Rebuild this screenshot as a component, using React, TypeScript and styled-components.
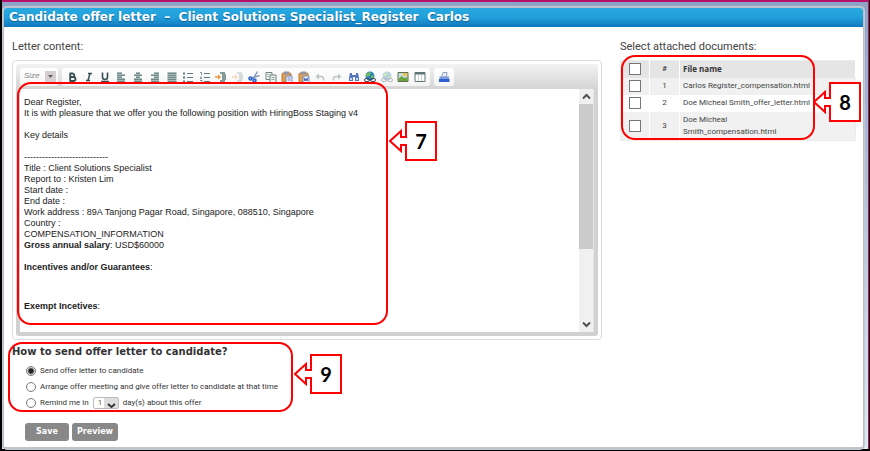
import React from "react";
import styled, { createGlobalStyle } from "styled-components";

const sans = `Roboto, "Noto Sans", sans-serif`;
const wide = `"DejaVu Sans", Verdana, sans-serif`;
const arial = `"Liberation Sans", Arial, sans-serif`;

const GlobalStyle = createGlobalStyle`
  *, *::before, *::after { box-sizing: border-box; }
  body { margin: 0; background: #000; font-family: ${sans}; color: #444; }
  button, select, input { font-family: inherit; margin: 0; }
`;

const Desktop = styled.div`
  min-height: 100vh;
  display: flex;
  border: solid #000;
  border-width: 0 1px 2px 2px;
`;

const Backdrop = styled.div`
  flex: 1;
  display: flex;
  padding: 5px 4px 0 1px;
  border-top: 2px solid #b5106a;
  border-right: 1px solid #b5106a;
  background: linear-gradient(#8fa3c6, #a9b9d6 30%, #dfeaf3);
`;

const Dialog = styled.section`
  flex: 1;
  min-width: 0;
  background: #fff;
  border: 1px solid #b9bdc4;
  border-bottom: 2px solid #bfc4c9;
  border-radius: 4px;
  box-shadow: 0 0 0 1px #c3c9d3;
`;

const TitleBar = styled.h1`
  margin: 0;
  padding: 0 5px;
  background: linear-gradient(#27a9e1 0%, #229fda 50%, #1079bf 100%);
  border-radius: 3px 3px 0 0;
  color: #fff;
  font: bold 12px/19px ${wide};
  white-space: pre;
  text-shadow: 0 1px 1px #0b5f98;
`;

const Columns = styled.div`
  display: grid;
  grid-template-columns: 5fr 2fr;
  gap: 18px;
  padding: 12px 7px 0 8px;
`;

const Column = styled.div`
  min-width: 0;
`;

const Label = styled.h2`
  margin: 0 0 5px;
  font: 11px/16px ${sans};
  color: #444;
`;

const Editor = styled.div`
  padding: 3px;
  border: 1px solid #dcdcdc;
  border-radius: 4px;
`;

const EditorShell = styled.div`
  position: relative;
  padding: 0 4px 4px;
  border-radius: 3px;
  background: linear-gradient(#f3f3f3 0, #d3d3d3 26px, #d0d0d0 100%);
`;

const Toolbar = styled.div`
  display: flex;
  align-items: center;
  gap: 4px;
  height: 25px;
  padding: 2px 0 1px;
`;

const ToolGroup = styled.div<{ $tools: number }>`
  display: grid;
  grid-template-columns: repeat(${(p) => p.$tools}, 1fr);
  width: ${(p) => (p.$tools > 1 ? 368 : 20)}px;
  height: 18px;
  padding: 0 2px;
  border-radius: 3px;
  background: linear-gradient(#ffffff, #f4f4f4);
`;

const ToolButton = styled.button`
  display: grid;
  place-items: center;
  padding: 0;
  border: 0;
  background: none;
`;

const SizeButton = styled.button`
  display: flex;
  align-items: center;
  justify-content: space-between;
  width: 38px;
  height: 18px;
  padding: 0 2px 2px 4px;
  border: 0;
  border-radius: 3px;
  background: linear-gradient(#ffffff, #f4f4f4);
  font: italic 8px/12px ${arial};
  color: #888;
`;

const SizeArrow = styled.svg`
  background: #d6cfd2;
`;

const EditArea = styled.div`
  display: flex;
  height: 243px;
  background: #fff;
`;

const Letter = styled.div`
  flex: 1;
  min-width: 0;
  padding: 8px 4px;
  overflow: hidden;
  outline: 0;
  font: 9px/11px ${arial};
  color: #222;

  p {
    margin: 0 0 11px;
  }
  p:last-child {
    margin-top: 28px;
  }
`;

const Scrollbar = styled.div`
  display: flex;
  flex-direction: column;
  width: 15px;
  background: #f0f0f0;
  border-right: 1px solid #e6e6e6;
`;

const ScrollButton = styled.button`
  display: grid;
  place-items: center;
  height: 15px;
  padding: 0;
  border: 0;
  background: #f0f0f0;
`;

const ScrollTrack = styled.div`
  flex: 1;
`;

const ScrollThumb = styled.div`
  height: 68%;
  background: #cbcbcb;
`;

const DeliveryArea = styled.div`
  position: relative;
  margin-top: 4px;
`;

const Delivery = styled.fieldset`
  min-width: 0;
  margin: 0;
  padding: 0 0 7px;
  border: 0;
`;

const DeliveryTitle = styled.legend`
  padding: 0;
  margin-bottom: 3px;
  font: bold 10px/16px ${wide};
  color: #333;
`;

const Option = styled.div`
  display: flex;
  align-items: center;
  gap: 4px;
  height: 16px;
  padding-left: 14px;
  font-size: 8px;
  line-height: 12px;
  color: #333;
`;

const Radio = styled.input`
  appearance: none;
  flex: none;
  width: 10px;
  height: 10px;
  border: 1px solid #777;
  border-radius: 50%;
  background: #fff;

  &:checked {
    background: radial-gradient(circle, #222 0 2px, #fff 4px);
  }
`;

const DayPicker = styled.span`
  position: relative;
  display: flex;
  width: 26px;
  height: 12px;
`;

const DaySelect = styled.select`
  appearance: none;
  width: 100%;
  padding: 0 0 0 4px;
  border: 1px solid #bbb;
  border-radius: 2px;
  background: linear-gradient(90deg, #fff 10px, #dedede 10px);
  font-size: 8px;
  line-height: 10px;
  color: #7a5a4a;
`;

const DayArrow = styled.svg`
  position: absolute;
  right: 3px;
  bottom: 0;
  pointer-events: none;
`;

const Actions = styled.div`
  display: flex;
  gap: 3px;
  padding: 5px 0 5px 13px;
`;

const ActionButton = styled.button`
  min-width: 44px;
  height: 18px;
  padding: 0 5px;
  border: 0;
  border-radius: 3px;
  background: #888;
  color: #fff;
  font: bold 8px/18px ${wide};
`;

const Attachments = styled.div`
  position: relative;
`;

const FileTable = styled.table`
  width: 100%;
  border: 1px solid #ececec;
  border-collapse: collapse;
  font-size: 8px;
  line-height: 12px;
  color: #444;
`;

const FileRow = styled.tr<{ $tone: string }>`
  background: ${(p) => p.$tone};
`;

const cell = `
  height: 17px;
  padding: 2px 0 2px 3px;
  border-right: 1px solid #fff;
  text-align: left;
`;

const HeadCell = styled.th`
  ${cell}
  font: bold 8px/12px "Open Sans", sans-serif;
  color: #333;
`;

const TickCell = styled.td`
  ${cell}
  width: 29px;
  padding: 0 0 0 8px;
  line-height: 0;
`;

const NumberCell = styled.td`
  ${cell}
  width: 30px;
  padding: 0;
  text-align: center;
`;

const NameCell = styled.td`
  ${cell}
  border-right: 0;
`;

const FileName = styled.label`
  display: block;
  max-width: 132px;
`;

const Tick = styled.input`
  appearance: none;
  width: 12px;
  height: 12px;
  border: 1px solid #777;
  background: #fff;
`;

const Outline = styled.div<{ $inset: string }>`
  position: absolute;
  inset: ${(p) => p.$inset};
  border: 2px solid #f00;
  border-radius: 14px;
  pointer-events: none;
`;

const CalloutBody = styled.div<{ $at: string; $gap: number }>`
  position: absolute;
  left: calc(100% + ${(p) => p.$gap}px);
  top: ${(p) => p.$at};
  display: flex;
  align-items: center;
  transform: translateY(-50%);
`;

const CalloutArrow = styled.svg`
  position: relative;
  z-index: 1;
  margin-right: -2px;
`;

const CalloutBox = styled.div`
  width: 32px;
  height: 40px;
  border: 2px solid #f00;
  background: #fff;
  color: #000;
  font: bold 20px/36px Lato, sans-serif;
  text-align: center;
`;

function Callout({ n, at = "50%", gap = 3 }: { n: number; at?: string; gap?: number }) {
  return (
    <CalloutBody $at={at} $gap={gap}>
      <CalloutArrow width="18" height="24">
        <path d="M18 8H12V2L1 12L12 22V16H18" fill="#fff" stroke="#f00" strokeWidth="2" />
      </CalloutArrow>
      <CalloutBox>{n}</CalloutBox>
    </CalloutBody>
  );
}

const ink = "#5d7c7a";

function lines(widths: number[], align: "l" | "c" | "r") {
  return widths.map((w, i) => (
    <rect key={i} x={align === "l" ? 1 : align === "r" ? 10 - w : 6 - w / 2} y={1.5 + i * 2} width={w} height="1.4" fill={ink} />
  ));
}

const clipboard = (
  <>
    <rect x="1" y="2" width="9" height="9" rx="1" fill="#e0a050" stroke="#b87a3a" />
    <rect x="3" y="0.5" width="5" height="3" fill="#8d97ad" />
    <path d="M5 5h6v6.5H5z" fill="#eef4ff" stroke="#7c8fb8" />
  </>
);

const globe = (
  <>
    <circle cx="6" cy="5" r="4.5" fill="#2f7fc8" />
    <path d="M3 2l3-1 1 2-2 2-2 1-1-2zM7 5l3-1-1 4-2 0z" fill="#6cc04b" />
    <rect x="0.5" y="7.5" width="5" height="3" rx="1.5" fill="none" stroke="#445" />
    <rect x="6.5" y="7.5" width="5" height="3" rx="1.5" fill="none" stroke="#445" />
  </>
);

const indent = (
  <>
    <path d="M5 2h5M7 4h4M7 6h4M7 8h4M5 10h5" stroke={ink} strokeWidth="1.4" />
    <path d="M0 6h4" stroke="#f0963a" strokeWidth="1.5" />
    <path d="M3 3.2L6 6L3 8.8z" fill="#f0963a" />
  </>
);

const tools: [string, React.ReactNode][] = [
  ["Bold", <path d="M3.5 2.5H7a1.8 1.8 0 0 1 0 3.5H4M4 6h3.5a2 2 0 0 1 0 4H3.5M4.2 2.5V10" fill="none" stroke="#354f50" strokeWidth="1.8" />],
  ["Italic", <path d="M5 2.5h4M3 9.5h4M7 2.5L5 9.5" fill="none" stroke="#354f50" strokeWidth="1.5" />],
  ["Underline", <path d="M3.5 1.5v4.5a2.5 2.5 0 0 0 5 0V1.5M2 10.5h8" fill="none" stroke="#354f50" strokeWidth="1.6" />],
  ["Align left", lines([5, 8, 5, 8, 8], "l")],
  ["Align centre", lines([4, 8, 4, 8, 8], "c")],
  ["Align right", lines([5, 8, 5, 8, 8], "r")],
  ["Justify", lines([9, 9, 9, 9, 9], "c")],
  ["Bulleted list", <><path d="M5 2.5h6M5 6.5h6M5 10.5h6" stroke={ink} /><path d="M1 1.5h2v2H1zM1 5.5h2v2H1zM1 9.5h2v2H1z" fill={ink} /></>],
  ["Numbered list", <><path d="M5 2.5h6M5 6.5h6M5 10.5h6" stroke={ink} /><path d="M1 1.5h1.5V4M1 6h2M1 7.5h2M1 9.5h2v2H1" fill="none" stroke={ink} strokeWidth="0.8" /></>],
  ["Increase indent", indent],
  ["Decrease indent", <g opacity="0.3">{indent}</g>],
  ["Cut", <><path d="M9.5 0.5L5.5 7M11.5 4.5L4 7" stroke="#8293b8" strokeWidth="1.4" /><circle cx="2.5" cy="7.5" r="1.5" fill="#9ab8ee" stroke="#2f66cc" strokeWidth="1.6" /><circle cx="6.5" cy="9.5" r="1.5" fill="#9ab8ee" stroke="#2f66cc" strokeWidth="1.6" /></>],
  ["Copy", <><path d="M1 1.5h6v7H1z" fill="#f4f7f7" stroke="#71847f" /><path d="M5 4h6v7.5H5z" fill="#eef3ee" stroke="#71847f" /><path d="M6.5 6.5h3M6.5 8.5h3M2.5 3.5h2M2.5 5.5h2" stroke="#8fa49a" /></>],
  ["Paste", <>{clipboard}<path d="M6.5 7h3M6.5 9h3" stroke="#6f87bd" /></>],
  ["Paste from Word", <>{clipboard}<path d="M6 6.5l1 3.5 1-2.5 1 2.5 1-3.5" fill="none" stroke="#3f62b5" /></>],
  ["Undo", <><path d="M5 2.5V8.5L1.5 5.5z" fill="#bcc6c6" /><path d="M4 5.5h3Q10 5.5 9.5 9.5" fill="none" stroke="#bcc6c6" strokeWidth="1.6" /></>],
  ["Redo", <><path d="M7 2.5V8.5L10.5 5.5z" fill="#bcc6c6" /><path d="M8 5.5H5Q2 5.5 2.5 9.5" fill="none" stroke="#bcc6c6" strokeWidth="1.6" /></>],
  ["Find", <><path d="M2 2h2v2h4V2h2l1 5v3H7V6H5v4H1V7z" fill="#5576be" /><path d="M2 7h2v2H2zM8 7h2v2H8z" fill="#c7dbfb" /></>],
  ["Link", globe],
  ["Unlink", <g opacity="0.35">{globe}</g>],
  ["Image", <><path d="M1 1.5h10v9H1z" fill="#c6dfe6" stroke="#5d6e45" /><path d="M1.5 8l3-3 3 2 3-1v4h-9z" fill="#6ba33d" /><path d="M6 2h4v3H6z" fill="#f2c14c" /></>],
  ["Table", <><path d="M1 1.5h10v9H1z" fill="#fff" stroke="#5d7477" /><path d="M1 2.5h10" stroke="#5d7477" strokeWidth="2" /><path d="M4.5 4v6M7.5 4v6" stroke="#c6d1d2" /></>],
];

const print = (
  <>
    <path d="M3.5 6L5 1.5h4L8.5 6z" fill="#e9eef8" stroke="#8e9fc0" />
    <path d="M1.5 5.5h9.5v3H1.5z" fill="#7e9bda" />
    <path d="M1 8h10.5v3H1z" fill="#2c5fd0" />
  </>
);

function Tool({ name, children }: { name: string; children: React.ReactNode }) {
  return (
    <ToolButton type="button" aria-label={name}>
      <svg width="12" height="12" viewBox="0 0 12 12">{children}</svg>
    </ToolButton>
  );
}

const files = [
  "Carlos Register_compensation.html",
  "Doe Micheal Smith_offer_letter.html",
  "Doe Micheal Smith_compensation.html",
];

export default function App() {
  return (
    <Desktop>
      <GlobalStyle />
      <Backdrop>
        <Dialog>
          <TitleBar>{"Candidate offer letter  –  Client Solutions Specialist_Register  Carlos"}</TitleBar>
          <Columns>
            <Column>
              <Label id="letter-label">Letter content:</Label>
              <Editor>
                <EditorShell>
                  <Toolbar>
                    <SizeButton type="button">
                      Size
                      <SizeArrow width="11" height="11"><path d="M3 4h5L5.5 7z" fill="#665c60" /></SizeArrow>
                    </SizeButton>
                    <ToolGroup $tools={22}>
                      {tools.map(([name, art]) => <Tool key={name} name={name}>{art}</Tool>)}
                    </ToolGroup>
                    <ToolGroup $tools={1}><Tool name="Print">{print}</Tool></ToolGroup>
                  </Toolbar>
                  <EditArea>
                    <Letter role="textbox" aria-labelledby="letter-label" contentEditable suppressContentEditableWarning spellCheck={false}>
                      <p>Dear Register,<br />It is with pleasure that we offer you the following position with HiringBoss Staging v4</p>
                      <p>Key details</p>
                      <p>
                        ----------------------------<br />
                        Title : Client Solutions Specialist<br />
                        Report to : Kristen Lim<br />
                        Start date :<br />
                        End date :<br />
                        Work address : 89A Tanjong Pagar Road, Singapore, 088510, Singapore<br />
                        Country :<br />
                        COMPENSATION_INFORMATION<br />
                        <b>Gross annual salary</b>: USD$60000
                      </p>
                      <p><b>Incentives and/or Guarantees</b>:</p>
                      <p><b>Exempt Incetives</b>:</p>
                    </Letter>
                    <Scrollbar>
                      <ScrollButton type="button" aria-label="Scroll up">
                        <svg width="9" height="7"><path d="M1 5.5L4.5 2L8 5.5" fill="none" stroke="#505050" strokeWidth="2" /></svg>
                      </ScrollButton>
                      <ScrollTrack><ScrollThumb /></ScrollTrack>
                      <ScrollButton type="button" aria-label="Scroll down">
                        <svg width="9" height="7"><path d="M1 1.5L4.5 5L8 1.5" fill="none" stroke="#505050" strokeWidth="2" /></svg>
                      </ScrollButton>
                    </Scrollbar>
                  </EditArea>
                  <Outline $inset="18px 210px 11px 1px"><Callout n={7} at="24%" /></Outline>
                </EditorShell>
              </Editor>
              <DeliveryArea>
                <Delivery>
                  <DeliveryTitle>How to send offer letter to candidate?</DeliveryTitle>
                  <Option>
                    <Radio type="radio" name="delivery" id="send" defaultChecked />
                    <label htmlFor="send">Send offer letter to candidate</label>
                  </Option>
                  <Option>
                    <Radio type="radio" name="delivery" id="meet" />
                    <label htmlFor="meet">Arrange offer meeting and give offer letter to candidate at that time</label>
                  </Option>
                  <Option>
                    <Radio type="radio" name="delivery" id="remind" />
                    <label htmlFor="remind">Remind me in</label>
                    <DayPicker>
                      <DaySelect aria-label="Days" defaultValue="1"><option>1</option><option>2</option><option>3</option></DaySelect>
                      <DayArrow width="9" height="6"><path d="M1 1L4.5 4L8 1" fill="none" stroke="#333" strokeWidth="2" /></DayArrow>
                    </DayPicker>
                    <span>day(s) about this offer</span>
                  </Option>
                </Delivery>
                <Outline $inset="-2px 309px 6px -4px"><Callout n={9} at="45%" /></Outline>
              </DeliveryArea>
              <Actions>
                <ActionButton type="button">Save</ActionButton>
                <ActionButton type="button">Preview</ActionButton>
              </Actions>
            </Column>
            <Column>
              <Label>Select attached documents:</Label>
              <Attachments>
                <FileTable>
                  <thead>
                    <FileRow $tone="#e5e5e5">
                      <TickCell><Tick type="checkbox" aria-label="Select all" /></TickCell>
                      <NumberCell as="th">#</NumberCell>
                      <HeadCell>File name</HeadCell>
                    </FileRow>
                  </thead>
                  <tbody>
                    {files.map((name, i) => (
                      <FileRow key={name} $tone={i % 2 ? "#fff" : "#f1f1f1"}>
                        <TickCell><Tick type="checkbox" id={`file-${i}`} /></TickCell>
                        <NumberCell>{i + 1}</NumberCell>
                        <NameCell><FileName htmlFor={`file-${i}`}>{name}</FileName></NameCell>
                      </FileRow>
                    ))}
                  </tbody>
                </FileTable>
                <Outline $inset="-5px 41px 1px 1px"><Callout n={8} at="56%" gap={0} /></Outline>
              </Attachments>
            </Column>
          </Columns>
        </Dialog>
      </Backdrop>
    </Desktop>
  );
}
